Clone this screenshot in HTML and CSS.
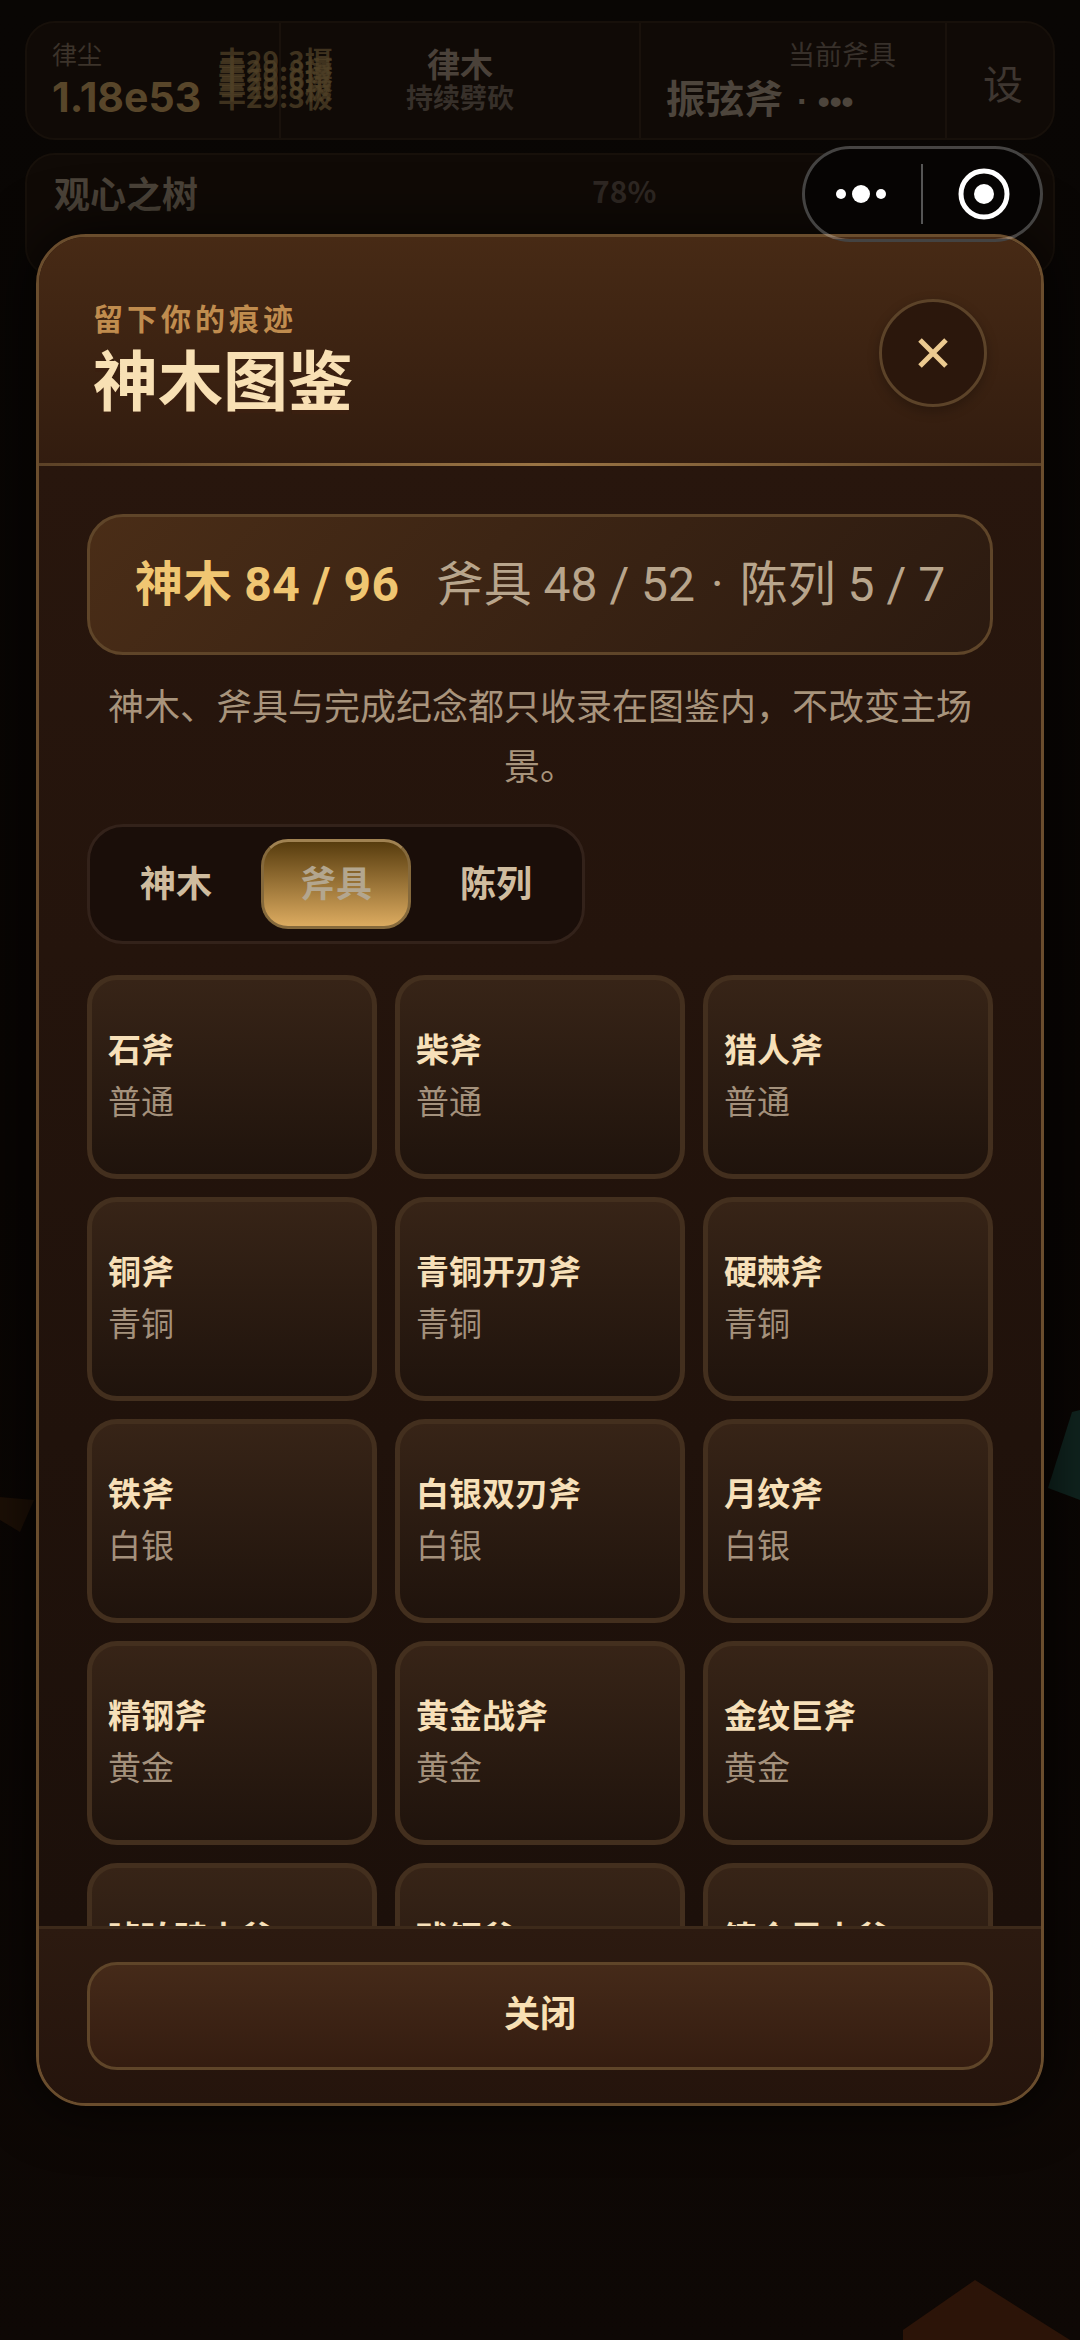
FILE: index.html
```html
<!DOCTYPE html>
<html lang="zh-CN">
<head>
    <meta charset="UTF-8">
    <meta name="viewport" content="width=device-width, initial-scale=1.0">
    <title>神木图鉴</title>
    <link rel="stylesheet" href="styles.css">
</head>
<body>
    <div class="scene">
        <svg class="scene-art" width="1080" height="2340" viewBox="0 0 1080 2340">
            <polygon points="0,1497 34,1500 20,1532 0,1520" fill="#1d1006"/>
            <polygon points="1080,1410 1072,1412 1048,1488 1080,1500" fill="#10241f"/>
            <polygon points="975,2280 903,2330 903,2340 1070,2340" fill="#2c1408"/>
        </svg>

        <div class="hud">
            <div class="hud-bar">
                <div class="hud-cell hud-dust">
                    <div class="dust-text">
                        <div class="dust-label">律尘</div>
                        <div class="dust-value">1.18e53</div>
                    </div>
                    <div class="stack">
                        <span>丰29.3摄</span>
                        <span>丰29.8摄</span>
                        <span>丰29.6摄</span>
                        <span>丰29.8极</span>
                        <span>丰29.3极</span>
                    </div>
                </div>
                <div class="hud-cell hud-wood">
                    <div class="wood-name">律木</div>
                    <div class="wood-sub">持续劈砍</div>
                </div>
                <div class="hud-cell hud-axe">
                    <div class="axe-label">当前斧具</div>
                    <div class="axe-value">振弦斧<span class="axe-dots">· •••</span></div>
                </div>
                <div class="hud-cell hud-set">设</div>
            </div>
            <div class="hud-tree">
                <span class="tree-name">观心之树</span>
                <span class="tree-pct">78%</span>
            </div>
        </div>
    </div>

    <div class="modal">
        <div class="modal-head">
            <div class="head-text">
                <div class="eyebrow">留下你的痕迹</div>
                <h1 class="title">神木图鉴</h1>
            </div>
            <button class="close-btn">
                <svg width="30" height="30" viewBox="0 0 30 30">
                    <path d="M2 2L28 28M28 2L2 28" stroke="#ecca90" stroke-width="5" fill="none"/>
                </svg>
            </button>
        </div>

        <div class="modal-body">
            <div class="summary">
                <span class="summary-main">神木 84 / 96</span>
                <span class="summary-rest">斧具 48 / 52<span class="summary-dot">·</span>陈列 5 / 7</span>
            </div>
            <p class="note">神木、斧具与完成纪念都只收录在图鉴内，不改变主场景。</p>

            <div class="tabs">
                <div class="tab">神木</div>
                <div class="tab active">斧具</div>
                <div class="tab">陈列</div>
            </div>

            <div class="grid">
                <div class="card"><div class="card-name">石斧</div><div class="card-grade">普通</div></div>
                <div class="card"><div class="card-name">柴斧</div><div class="card-grade">普通</div></div>
                <div class="card"><div class="card-name">猎人斧</div><div class="card-grade">普通</div></div>
                <div class="card"><div class="card-name">铜斧</div><div class="card-grade">青铜</div></div>
                <div class="card"><div class="card-name">青铜开刃斧</div><div class="card-grade">青铜</div></div>
                <div class="card"><div class="card-name">硬棘斧</div><div class="card-grade">青铜</div></div>
                <div class="card"><div class="card-name">铁斧</div><div class="card-grade">白银</div></div>
                <div class="card"><div class="card-name">白银双刃斧</div><div class="card-grade">白银</div></div>
                <div class="card"><div class="card-name">月纹斧</div><div class="card-grade">白银</div></div>
                <div class="card"><div class="card-name">精钢斧</div><div class="card-grade">黄金</div></div>
                <div class="card"><div class="card-name">黄金战斧</div><div class="card-grade">黄金</div></div>
                <div class="card"><div class="card-name">金纹巨斧</div><div class="card-grade">黄金</div></div>
                <div class="card"><div class="card-name">琥珀骑士斧</div><div class="card-grade">黄金</div></div>
                <div class="card"><div class="card-name">残钢斧</div><div class="card-grade">黄金</div></div>
                <div class="card"><div class="card-name">铸金黑士斧</div><div class="card-grade">黄金</div></div>
            </div>
        </div>

        <div class="modal-foot">
            <button class="foot-btn">关闭</button>
        </div>
    </div>

    <div class="capsule">
        <svg width="60" height="20" viewBox="0 0 60 20">
            <circle cx="5" cy="10" r="5" fill="#fff"/>
            <circle cx="25" cy="10" r="9" fill="#fff"/>
            <circle cx="45" cy="10" r="5" fill="#fff"/>
        </svg>
        <div class="capsule-line"></div>
        <svg width="52" height="52" viewBox="0 0 52 52">
            <circle cx="26" cy="26" r="23" fill="none" stroke="#fff" stroke-width="5"/>
            <circle cx="26" cy="26" r="10" fill="#fff"/>
        </svg>
    </div>
</body>
</html>
```

FILE: styles.css
```css
* {
    box-sizing: border-box;
}

body {
    margin: 0;
    width: 1080px;
    height: 2340px;
    overflow: hidden;
    position: relative;
    font-family: "Noto Sans CJK SC", "Noto Sans", sans-serif;
    background: linear-gradient(180deg, #090604 0%, #090503 50%, #0e0805 100%);
}

.scene {
    position: relative;
    height: 100%;
}

.scene-art {
    position: absolute;
    left: 0;
    top: 0;
}

.hud {
    position: relative;
    padding: 21px 25px 0;
}

.hud-bar {
    display: flex;
    height: 119px;
    border: 2px solid #17100a;
    border-radius: 30px;
    background: #100a06;
}

.hud-cell {
    border-right: 2px solid #19110b;
}

.hud-dust {
    width: 254px;
    padding: 12px 0 0 25px;
    position: relative;
}

.dust-label {
    font-size: 25px;
    line-height: 36px;
    color: #3c332a;
}

.dust-value {
    margin-top: 4px;
    font-size: 41px;
    line-height: 44px;
    font-weight: 700;
    font-family: Inter, "Noto Sans CJK SC", sans-serif;
    color: #58462a;
}

.stack span {
    position: absolute;
    left: 191px;
    font-size: 28px;
    line-height: 40px;
    font-weight: 700;
    color: #4f4026;
    white-space: nowrap;
    opacity: 0.75;
}

.stack span:nth-child(1) { top: 17px; }
.stack span:nth-child(2) { top: 26px; }
.stack span:nth-child(3) { top: 35px; }
.stack span:nth-child(4) { top: 44px; }
.stack span:nth-child(5) { top: 53px; }

.hud-wood {
    width: 360px;
    padding-top: 21px;
    text-align: center;
}

.wood-name {
    font-size: 33px;
    line-height: 38px;
    font-weight: 700;
    color: #4a4139;
}

.wood-sub {
    font-size: 27px;
    line-height: 30px;
    font-weight: 700;
    color: #37302a;
}

.hud-axe {
    width: 306px;
    padding: 12px 0 0 25px;
}

.axe-label {
    font-size: 27px;
    line-height: 37px;
    padding-left: 122px;
    color: #37302a;
}

.axe-value {
    font-size: 39px;
    line-height: 48px;
    font-weight: 700;
    color: #4d453c;
}

.axe-dots {
    margin-left: 14px;
    font-family: "Liberation Sans", sans-serif;
    font-size: 34px;
}

.hud-set {
    border-right: 0;
    flex: 1;
    padding: 31px 0 0 6px;
    text-align: center;
    font-size: 40px;
    line-height: 56px;
    color: #3e3630;
}

.hud-tree {
    display: flex;
    margin-top: 13px;
    height: 124px;
    padding: 12px 27px;
    border: 2px solid #17100a;
    border-radius: 30px;
    background: #100a06;
}

.tree-name {
    width: 538px;
    font-size: 36px;
    line-height: 50px;
    font-weight: 700;
    color: #4b4339;
}

.tree-pct {
    font-size: 30px;
    line-height: 46px;
    font-weight: 700;
    color: #2f2823;
}

.modal {
    position: absolute;
    left: 36px;
    top: 234px;
    width: 1008px;
    height: 1872px;
    display: flex;
    flex-direction: column;
    overflow: hidden;
    border: 3px solid #6a4d2d;
    border-radius: 50px;
    background: #26150d;
    box-shadow: 0 0 60px rgba(0, 0, 0, 0.8);
}

.modal-head {
    display: flex;
    justify-content: space-between;
    align-items: center;
    height: 229px;
    padding: 5px 54px 0 54px;
    border-bottom: 3px solid;
    border-image: linear-gradient(90deg, #5c4227, #9a7444, #5c4227) 1;
    background: linear-gradient(180deg, #472a15 0%, #321c0f 100%);
}

.head-text {
    margin-top: 8px;
}

.eyebrow {
    font-size: 30px;
    line-height: 40px;
    font-weight: 700;
    letter-spacing: 4px;
    color: #c08c4e;
}

.title {
    margin: 0;
    font-size: 65px;
    line-height: 80px;
    font-weight: 700;
    color: #f8e0b4;
    text-shadow: 0 4px 0 #3a1f10;
}

.close-btn {
    display: flex;
    align-items: center;
    justify-content: center;
    width: 108px;
    height: 108px;
    padding: 0;
    border: 3px solid #5c4329;
    border-radius: 50%;
    background: #2b170c;
    box-shadow: 0 4px 12px rgba(0, 0, 0, 0.25);
}

.modal-body {
    flex: 1;
    overflow: hidden;
    padding: 48px 48px 0;
    background: linear-gradient(180deg, #28160d 0%, #1c100a 100%);
}

.summary {
    display: flex;
    align-items: center;
    justify-content: center;
    gap: 36px;
    height: 141px;
    padding-bottom: 10px;
    border: 3px solid #5f4529;
    border-radius: 36px;
    background: linear-gradient(135deg, #4a2d17 0%, #2b1a10 100%);
    font-family: Roboto, "Noto Sans CJK SC", sans-serif;
    font-size: 48px;
    white-space: nowrap;
}

.summary-main {
    font-weight: 700;
    letter-spacing: 0.5px;
    color: #f0c672;
}

.summary-rest {
    color: #b8a58c;
}

.summary-dot {
    margin: 0 16px;
}

.note {
    margin: 19px 0 30px;
    font-size: 36px;
    line-height: 60px;
    text-align: center;
    color: #a8947c;
}

.tabs {
    display: inline-flex;
    gap: 10px;
    height: 120px;
    padding: 12px 11px;
    border: 3px solid #33221a;
    border-radius: 36px;
    background: #1a0e09;
    vertical-align: top;
}

.tab {
    display: flex;
    align-items: center;
    justify-content: center;
    width: 150px;
    padding-bottom: 6px;
    font-size: 36px;
    font-weight: 700;
    color: #cfbc9f;
}

.tab.active {
    border: 3px solid #85693c;
    border-top-color: #a08252;
    border-radius: 27px;
    background: linear-gradient(180deg, #573c0e 0%, #dcab60 100%);
    color: #b3a68f;
}

.grid {
    display: grid;
    grid-template-columns: repeat(3, 290px);
    grid-auto-rows: 204px;
    gap: 18px;
    margin-top: 31px;
}

.card {
    display: flex;
    flex-direction: column;
    justify-content: center;
    padding: 0 16px 7px;
    border: 5px solid #432f1e;
    border-radius: 30px;
    background: linear-gradient(180deg, #372417 0%, #1f130c 100%);
}

.card-name {
    font-size: 33px;
    line-height: 52px;
    font-weight: 700;
    color: #f7e0b9;
}

.card-grade {
    font-size: 33px;
    line-height: 52px;
    color: #a4917c;
}

.modal-foot {
    height: 177px;
    padding: 33px 48px 0;
    border-top: 3px solid #3d2a1a;
    background: linear-gradient(180deg, #2c1a10 0%, #25140c 100%);
}

.foot-btn {
    display: block;
    width: 100%;
    height: 108px;
    padding-bottom: 12px;
    border: 3px solid #5f4529;
    border-radius: 30px;
    background: linear-gradient(180deg, #452a19 0%, #341c10 100%);
    font-family: inherit;
    font-size: 36px;
    font-weight: 700;
    color: #f8e0b4;
}

.capsule {
    position: absolute;
    left: 802px;
    top: 146px;
    width: 241px;
    height: 96px;
    display: flex;
    align-items: center;
    padding-left: 31px;
    border: 3px solid rgba(255, 255, 255, 0.25);
    border-radius: 48px;
    background: linear-gradient(180deg, #060403 0, #060403 85px, transparent 85px);
}

.capsule-line {
    width: 2px;
    height: 60px;
    margin: 0 35px 0 25px;
    background: #555;
}
```
